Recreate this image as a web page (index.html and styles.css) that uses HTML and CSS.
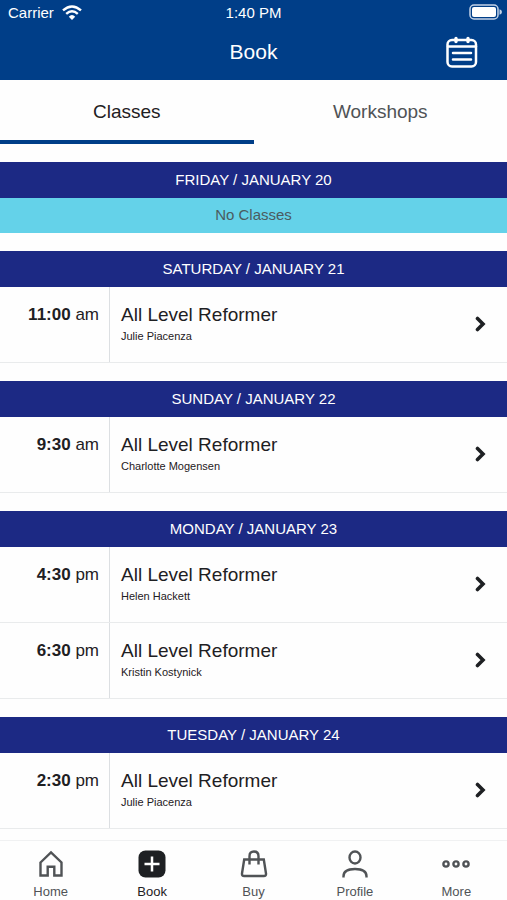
FILE: index.html
```html
<!DOCTYPE html>
<html lang="en">
<head>
<meta charset="utf-8">
<meta name="viewport" content="width=device-width, initial-scale=1">
<title>Book</title>
<link rel="stylesheet" href="styles.css">
</head>
<body>
<svg class="sprite" aria-hidden="true">
  <symbol id="chevron" viewBox="0 0 12 16"><path d="M2.500 2.500L8 8l-5.500 5.500" fill="none" stroke="currentColor" stroke-width="3.600" stroke-linecap="round"/></symbol>
</svg>
<div class="app">
  <header class="header">
    <div class="status">
      <span class="carrier">Carrier
        <svg width="20" height="15" viewBox="0 0 20 15" fill="none" stroke="currentColor" stroke-width="2.400"><path d="M1 5.400Q10-2.600 19 5.400M4.200 8.900Q10 3.700 15.800 8.900"/><path d="M6.800 11.700Q10 8.200 13.200 11.700L10 15z" fill="currentColor" stroke="none"/></svg>
      </span>
      <span class="clock">1:40 PM</span>
      <svg class="battery" width="33" height="16" viewBox="0 0 33 16"><rect x="1" y="1" width="28" height="14" rx="4" fill="none" stroke="#c3d2e6" stroke-width="1.500"/><rect x="3" y="3" width="24" height="10" rx="2" fill="#fff"/><path d="M30.500 5.200Q33 5.800 33 8T30.500 10.800z" fill="#c3d2e6"/></svg>
    </div>
    <div class="titlebar">
      <h1 class="title">Book</h1>
      <button class="calendar" type="button" aria-label="Calendar">
        <svg width="32" height="32" viewBox="0 0 32 32" fill="none" stroke="currentColor" stroke-width="2.500" stroke-linecap="round"><rect x="1.500" y="4" width="28.500" height="26.500" rx="4.500"/><path d="M2 10.500h28M7 17h18M7 23.500h18"/><path d="M10 2.500v3M22 2.500v3" stroke-width="3.400"/></svg>
      </button>
    </div>
  </header>
  <nav class="tabs">
    <a class="tab active" href="#classes">Classes</a>
    <a class="tab" href="#workshops">Workshops</a>
  </nav>
  <main class="schedule" id="classes">
    <section>
      <h2 class="day">FRIDAY / JANUARY 20</h2>
      <p class="empty">No Classes</p>
    </section>
    <section>
      <h2 class="day">SATURDAY / JANUARY 21</h2>
      <a class="row" href="#"><span class="time"><b>11:00</b> am</span><span class="info"><span class="name">All Level Reformer</span><span class="teacher">Julie Piacenza</span></span><svg class="chevron"><use href="#chevron"/></svg></a>
    </section>
    <section>
      <h2 class="day">SUNDAY / JANUARY 22</h2>
      <a class="row" href="#"><span class="time"><b>9:30</b> am</span><span class="info"><span class="name">All Level Reformer</span><span class="teacher">Charlotte Mogensen</span></span><svg class="chevron"><use href="#chevron"/></svg></a>
    </section>
    <section>
      <h2 class="day">MONDAY / JANUARY 23</h2>
      <a class="row" href="#"><span class="time"><b>4:30</b> pm</span><span class="info"><span class="name">All Level Reformer</span><span class="teacher">Helen Hackett</span></span><svg class="chevron"><use href="#chevron"/></svg></a>
      <a class="row" href="#"><span class="time"><b>6:30</b> pm</span><span class="info"><span class="name">All Level Reformer</span><span class="teacher">Kristin Kostynick</span></span><svg class="chevron"><use href="#chevron"/></svg></a>
    </section>
    <section>
      <h2 class="day">TUESDAY / JANUARY 24</h2>
      <a class="row" href="#"><span class="time"><b>2:30</b> pm</span><span class="info"><span class="name">All Level Reformer</span><span class="teacher">Julie Piacenza</span></span><svg class="chevron"><use href="#chevron"/></svg></a>
    </section>
  </main>
  <nav class="bottom">
    <a class="item" href="#home"><svg viewBox="0 0 28 28"><path d="M3.500 12.500L14 2.500l10.500 10V25.500h-7.200v-8.800h-6.600v8.800H3.500z"/></svg>Home</a>
    <a class="item current" href="#book"><svg viewBox="0 0 28 28"><rect x="0.500" y="0.500" width="27" height="27" rx="7" fill="currentColor" stroke="none"/><path d="M14 6.500v15M6.500 14h15" stroke="#fff" stroke-width="2.500"/></svg>Book</a>
    <a class="item" href="#buy"><svg viewBox="0 0 28 28"><path d="M4.200 9.500h19.600l2.200 14q.3 2.500-2.200 2.500H4.200q-2.500 0-2.200-2.500zM9.500 14.500V6.200q0-4.700 4.500-4.700t4.500 4.700v8.300"/></svg>Buy</a>
    <a class="item" href="#profile"><svg viewBox="0 0 28 28"><ellipse cx="14" cy="7.500" rx="5.500" ry="6"/><path d="M2.500 27.500v-1.200q0-7.300 11.500-7.300t11.500 7.300v1.200"/></svg>Profile</a>
    <a class="item" href="#more"><svg viewBox="0 0 28 28"><circle cx="4" cy="14" r="2.600"/><circle cx="14" cy="14" r="2.600"/><circle cx="24" cy="14" r="2.600"/></svg>More</a>
  </nav>
</div>
</body>
</html>
```
FILE: styles.css
```css
* { box-sizing: border-box; }
body {
  margin: 0;
  background: #fefefe;
  color: #1e2023;
  font-family: "Liberation Sans", Arial, sans-serif;
}
a { color: inherit; text-decoration: none; }
h1, h2, p { margin: 0; font-weight: 400; }
.sprite { display: none; }
.app { min-height: 100vh; display: flex; flex-direction: column; }

.header { background: #003e88; color: #fff; }
.status {
  display: grid;
  grid-template-columns: 1fr auto 1fr;
  align-items: center;
  height: 24px;
  padding: 0 5px;
  font-size: 15px;
}
.carrier { display: flex; align-items: center; gap: 8px; padding-left: 3px; }
.battery { justify-self: end; }
.titlebar {
  display: grid;
  grid-template-columns: 1fr auto 1fr;
  align-items: center;
  height: 56px;
  padding: 0 29px;
}
.title { grid-column: 2; font-size: 21px; }
.calendar {
  display: flex;
  justify-self: end;
  padding: 0;
  border: 0;
  background: none;
  color: #fff;
}

.tabs { display: flex; }
.tab {
  flex: 1;
  height: 64px;
  border-bottom: 4px solid transparent;
  font-size: 19px;
  line-height: 64px;
  text-align: center;
  color: #505356;
}
.tab.active { border-color: #003e88; color: #1e2023; }

.schedule {
  flex: 1;
  display: flex;
  flex-direction: column;
  gap: 18px;
  padding: 18px 0 10px;
}
.day {
  height: 36px;
  background: #1c2984;
  color: #fff;
  font-size: 15px;
  line-height: 36px;
  text-align: center;
}
.empty {
  height: 35px;
  background: #64d2e9;
  color: #4b5b60;
  font-size: 15px;
  line-height: 34px;
  text-align: center;
}
.row {
  display: grid;
  grid-template-columns: 110px 1fr auto;
  height: 76px;
  border-bottom: 1px solid #e9ebec;
}
.time {
  padding: 17px 10px 0 0;
  border-right: 1px solid #dcdfe2;
  font-size: 17px;
  line-height: 22px;
  text-align: right;
}
.info { display: flex; flex-direction: column; padding: 16px 0 0 11px; }
.name { font-size: 19px; line-height: 24px; }
.teacher { font-size: 11px; line-height: 19px; }
.chevron { width: 12px; height: 16px; margin: 0 20px 2px 0; align-self: center; }

.bottom {
  position: sticky;
  bottom: 0;
  display: flex;
  height: 60px;
  border-top: 1px solid #f0f1f2;
  background: #fefefe;
}
.item {
  flex: 1;
  display: flex;
  flex-direction: column;
  align-items: center;
  gap: 6px;
  padding-top: 9px;
  font-size: 13px;
  line-height: 16px;
  color: #505356;
}
.item svg { width: 28px; height: 28px; fill: none; stroke: currentColor; stroke-width: 2.400; }
.item.current { color: #1e2023; }
```
